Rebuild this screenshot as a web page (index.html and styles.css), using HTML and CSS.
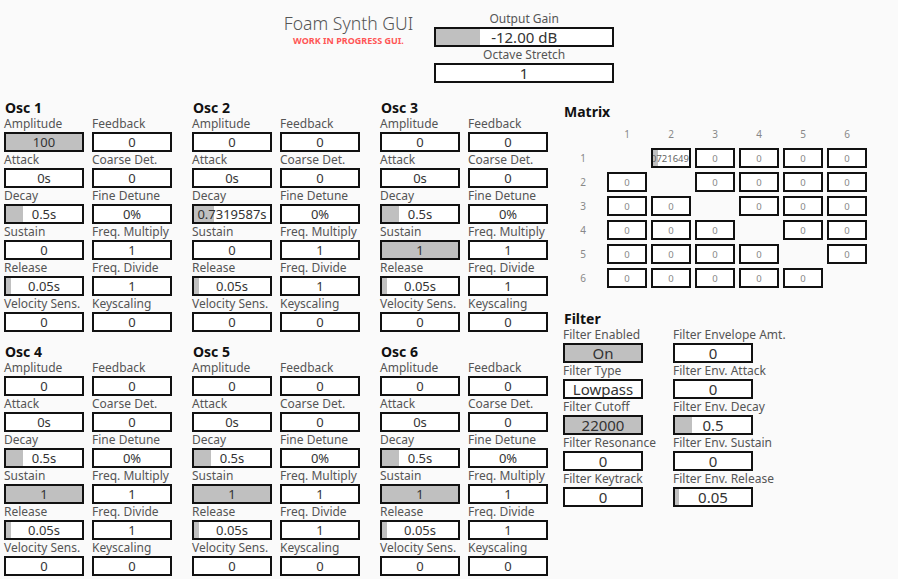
FILE: index.html
```html
<!DOCTYPE html>
<html lang="en">
<head>
	<meta charset="UTF-8">
	<meta name="viewport" content="width=device-width, initial-scale=1.0">
	<title>Foam Synth GUI</title>
	<link rel="stylesheet" href="styles.css">
</head>
<body>
	<header class="top">
		<div class="brand">
			<h1 class="brand-title">Foam Synth GUI</h1>
			<div class="wip">WORK IN PROGRESS GUI.</div>
		</div>
		<div class="master">
			<div class="label">Output Gain</div>
			<div class="knob big" style="--v: 25%">-12.00 dB</div>
			<div class="label">Octave Stretch</div>
			<div class="knob big">1</div>
		</div>
	</header>

	<main class="panels">
		<div class="oscs" id="oscs"></div>

		<div class="side">
			<section class="matrix-wrap">
				<h2 class="section-title">Matrix</h2>
				<div class="matrix" id="matrix"></div>
			</section>

			<section class="filter">
				<h2 class="section-title">Filter</h2>
				<div class="filter-grid">
					<div class="param"><div class="label">Filter Enabled</div><div class="knob big" style="--v: 100%">On</div></div>
					<div class="param"><div class="label">Filter Envelope Amt.</div><div class="knob big">0</div></div>
					<div class="param"><div class="label">Filter Type</div><div class="knob big">Lowpass</div></div>
					<div class="param"><div class="label">Filter Env. Attack</div><div class="knob big">0</div></div>
					<div class="param"><div class="label">Filter Cutoff</div><div class="knob big" style="--v: 100%">22000</div></div>
					<div class="param"><div class="label">Filter Env. Decay</div><div class="knob big" style="--v: 22%">0.5</div></div>
					<div class="param"><div class="label">Filter Resonance</div><div class="knob big">0</div></div>
					<div class="param"><div class="label">Filter Env. Sustain</div><div class="knob big">0</div></div>
					<div class="param"><div class="label">Filter Keytrack</div><div class="knob big">0</div></div>
					<div class="param"><div class="label">Filter Env. Release</div><div class="knob big" style="--v: 5%">0.05</div></div>
				</div>
			</section>
		</div>
	</main>

	<script type="text/javascript">

		// elements are prefixed with $

		const oscs = [1, 2, 3, 4, 5, 6].map(n => {
			const decay = n === 2 ? ['0.7319587s', 26] : ['0.5s', 22]
			const sustain = n > 2 ? ['1', 100] : ['0', 0]
			return {
				name: 'Osc ' + n,
				params: [
					['Amplitude', n === 1 ? '100' : '0', n === 1 ? 100 : 0],
					['Feedback', '0', 0],
					['Attack', '0s', 0],
					['Coarse Det.', '0', 0],
					['Decay', decay[0], decay[1]],
					['Fine Detune', '0%', 0],
					['Sustain', sustain[0], sustain[1]],
					['Freq. Multiply', '1', 0],
					['Release', '0.05s', 7],
					['Freq. Divide', '1', 0],
					['Velocity Sens.', '0', 0],
					['Keyscaling', '0', 0]
				]
			}
		})

		function createDivWithClass(className, text) {
			const $div = document.createElement('div')
			$div.className = className
			if (text !== undefined) $div.textContent = text
			return $div
		}

		function createKnob(className, value, fill) {
			const $knob = createDivWithClass(className, value)
			if (fill) $knob.style.setProperty('--v', fill + '%')
			return $knob
		}

		const $oscs = document.getElementById('oscs')
		oscs.forEach(osc => {
			const $osc = createDivWithClass('osc')
			$osc.append(createDivWithClass('section-title', osc.name))
			const $grid = createDivWithClass('osc-grid')
			osc.params.forEach(([label, value, fill]) => {
				const $param = createDivWithClass('param')
				$param.append(createDivWithClass('label', label), createKnob('knob', value, fill))
				$grid.append($param)
			})
			$osc.append($grid)
			$oscs.append($osc)
		})

		// matrix: header row, then one row per operator
		const $matrix = document.getElementById('matrix')
		$matrix.append(createDivWithClass('cell'))
		for (let c = 1; c <= 6; c++) $matrix.append(createDivWithClass('cell', c))
		for (let r = 1; r <= 6; r++) {
			$matrix.append(createDivWithClass('cell', r))
			for (let c = 1; c <= 6; c++) {
				if (r === c) {
					$matrix.append(createDivWithClass('cell'))
				} else if (r === 1 && c === 2) {
					// long value scrolls to its end like an input
					$matrix.append(createKnob('knob small long', '0.0721649', 13))
				} else {
					$matrix.append(createKnob('knob small', '0', 0))
				}
			}
		}

	</script>
</body>
</html>
```

FILE: styles.css
```css
html, body {
	padding: 0;
	margin: 0;
}

body {
	background: #fafafa;
	color: #333;
	font-family: "Noto Sans", "Open Sans", sans-serif;
}

/*/ Header /*/

.top {
	display: flex;
	justify-content: center;
	gap: 21px;
	padding-top: 11px;
}

.brand {
	display: flex;
	flex-direction: column;
	align-items: center;
}

.brand-title {
	margin: 0;
	font-size: 17.6px;
	font-weight: 300;
	line-height: 24px;
	color: #555;
}

.wip {
	font-size: 9px;
	font-weight: 700;
	line-height: 12px;
	color: #ff5555;
}

.master {
	width: 180px;
	text-align: center;
}

/*/ Shared controls /*/

.label {
	font-size: 12px;
	line-height: 16px;
	color: #555;
	white-space: nowrap;
}

.knob {
	box-sizing: border-box;
	height: 20px;
	border: 2px solid #111;
	background: linear-gradient(to right, #c0c0c0 var(--v, 0%), #fff var(--v, 0%));
	display: flex;
	align-items: center;
	justify-content: center;
	overflow: hidden;
	white-space: nowrap;
	font-size: 13px;
	color: #333;
}

.knob.big {
	font-size: 15px;
}

.knob.small {
	font-size: 9.5px;
	color: #888;
}

.knob.long {
	justify-content: flex-end;
	color: #666;
}

.section-title {
	margin: 0;
	font-size: 14px;
	font-weight: 700;
	line-height: 16px;
	color: #111;
}

/*/ Oscillators /*/

.panels {
	display: flex;
	align-items: flex-start;
	gap: 11px;
	padding: 17px 0 0 4px;
}

.oscs {
	display: grid;
	grid-template-columns: repeat(3, 172px);
	column-gap: 16px;
	row-gap: 12px;
}

.osc-grid {
	display: grid;
	grid-template-columns: 80px 80px;
	column-gap: 8px;
}

.osc .section-title {
	padding-left: 1px;
}

/*/ Matrix and filter /*/

.matrix-wrap {
	padding-top: 4px;
}

.matrix-wrap .section-title {
	padding-left: 1px;
}

.matrix {
	display: grid;
	grid-template-columns: repeat(7, 40px);
	grid-auto-rows: 20px;
	gap: 4px;
	margin-top: 4px;
}

.matrix .cell {
	display: flex;
	align-items: center;
	justify-content: center;
	font-size: 10px;
	color: #888;
}

.filter {
	margin-top: 23px;
}

.filter .section-title {
	padding-left: 1px;
}

.filter-grid {
	display: grid;
	grid-template-columns: 80px 80px;
	column-gap: 30px;
}
```
